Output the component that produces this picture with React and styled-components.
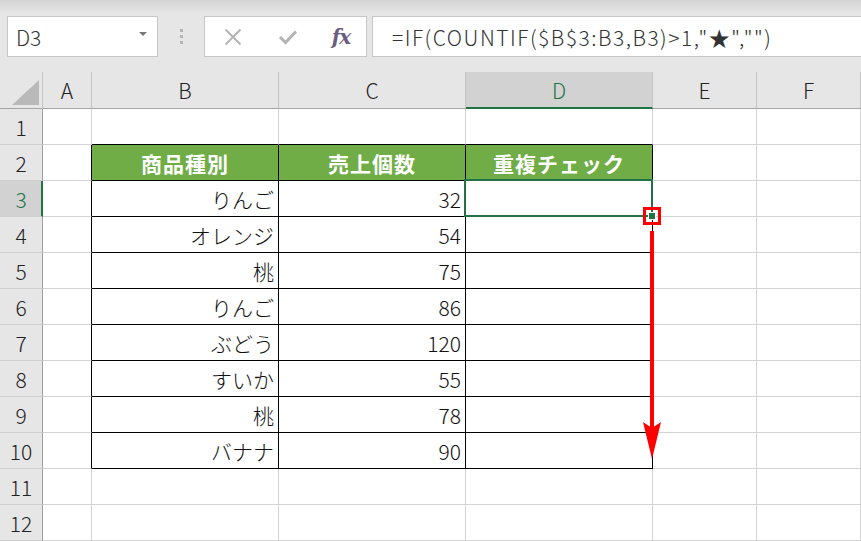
import React from "react";
import styled, { createGlobalStyle } from "styled-components";

const GlobalStyle = createGlobalStyle`
  html, body { margin: 0; padding: 0; background: #ffffff; overflow: hidden; }
  * { box-sizing: border-box; }
`;

const FONT = `"Noto Sans CJK JP", "Noto Sans", sans-serif`;
const GREEN = "#217346";

const Wrapper = styled.div`
  position: relative;
  width: 861px;
  height: 541px;
  overflow: hidden;
  font-family: ${FONT};
  font-weight: 300;
  background: #fff;
`;

const Toolbar = styled.div`
  height: 72px;
  display: flex;
  align-items: flex-start;
  padding: 16px 0 0 7px;
  background: linear-gradient(to bottom, #d4d4d4 0px, #e6e6e6 14px, #e6e6e6 100%);
`;

const NameBox = styled.div`
  width: 151px;
  height: 41px;
  background: #fff;
  border: 1px solid #c6c6c6;
  display: flex;
  align-items: center;
  justify-content: space-between;
  padding: 1px 10px 0 8px;
  font-size: 21px;
  color: #333;
`;

const Caret = styled.span`
  width: 0;
  height: 0;
  border-left: 4px solid transparent;
  border-right: 4px solid transparent;
  border-top: 4px solid #777;
  margin-top: -6px;
`;

const Grip = styled.div`
  width: 46px;
  height: 41px;
  display: flex;
  flex-direction: column;
  align-items: center;
  justify-content: center;
  gap: 3px;
`;

const GripDot = styled.span`
  width: 3px;
  height: 3px;
  background: #b4b4b4;
`;

const ButtonBox = styled.div`
  width: 163px;
  height: 41px;
  background: #fff;
  border: 1px solid #c6c6c6;
  display: flex;
  align-items: center;
  padding-left: 17px;
`;

const IconSlot = styled.div`
  width: ${(p) => p.$w}px;
  display: flex;
  justify-content: center;
  align-items: center;
`;

const Fx = styled.span`
  font-family: "DejaVu Serif", "Liberation Serif", serif;
  font-style: italic;
  font-weight: bold;
  font-size: 20px;
  color: #6a5d80;
  letter-spacing: -1px;
`;

const FormulaInput = styled.div`
  flex: 1;
  margin-left: 5px;
  height: 41px;
  background: #fff;
  border: 1px solid #c6c6c6;
  border-right: none;
  display: flex;
  align-items: center;
  padding: 1px 0 0 19px;
  font-size: 21px;
  letter-spacing: 1.5px;
  color: #333;
  white-space: nowrap;
`;

const Sheet = styled.div`
  display: grid;
  grid-template-columns: 43px 49px 187px 187px 187px 104px 1fr;
  grid-template-rows: 37px repeat(12, 36px);
`;

const Corner = styled.div`
  position: relative;
  background: #e6e6e6;
  border-right: 1px solid #c3c3c3;
  border-bottom: 1px solid #a6a6a6;
`;

const CornerTri = styled.span`
  position: absolute;
  right: 3px;
  bottom: 3px;
  width: 0;
  height: 0;
  border-left: 27px solid transparent;
  border-bottom: 25px solid #b9b9b9;
`;

const ColHeader = styled.div`
  background: ${(p) => (p.$active ? "#d2d2d2" : "#e6e6e6")};
  color: ${(p) => (p.$active ? GREEN : "#222")};
  border-right: 1px solid #c3c3c3;
  border-bottom: ${(p) => (p.$active ? `2px solid ${GREEN}` : "1px solid #a6a6a6")};
  display: flex;
  align-items: center;
  justify-content: center;
  font-size: 21px;
  padding-top: ${(p) => (p.$active ? "1px" : "0")};
`;

const RowHeader = styled.div`
  background: ${(p) => (p.$active ? "#d2d2d2" : "#e6e6e6")};
  color: ${(p) => (p.$active ? GREEN : "#222")};
  border-right: ${(p) => (p.$active ? `2px solid ${GREEN}` : "1px solid #a0a0a0")};
  border-bottom: 1px solid #cfcfcf;
  display: flex;
  align-items: center;
  justify-content: center;
  font-size: 21px;
  padding-left: ${(p) => (p.$active ? "1px" : "0")};
`;

const Cell = styled.div`
  position: relative;
  background: ${(p) => (p.$head ? "#70ad47" : "#fff")};
  color: ${(p) => (p.$head ? "#fff" : "#111")};
  font-weight: ${(p) => (p.$head ? 700 : 300)};
  border-right: 1px solid ${(p) => p.$rb};
  border-bottom: 1px solid ${(p) => p.$bb};
  display: flex;
  align-items: center;
  justify-content: ${(p) => (p.$head ? "center" : "flex-end")};
  padding: 1px 4px 0 4px;
  font-size: 21px;
  letter-spacing: ${(p) => (p.$head ? "1px" : "0")};
  white-space: nowrap;
`;

const Selection = styled.div`
  position: absolute;
  z-index: 2;
  top: -2px;
  left: -2px;
  right: -1px;
  bottom: -1px;
  border: 2px solid ${GREEN};
  pointer-events: none;
`;

const FillHandle = styled.span`
  position: absolute;
  right: -5px;
  bottom: -5px;
  width: 8px;
  height: 8px;
  background: ${GREEN};
  border: 1px solid #fff;
`;

const Annotation = styled.svg`
  position: absolute;
  z-index: 3;
  left: 640px;
  top: 204px;
  overflow: visible;
`;

const COLS = ["A", "B", "C", "D", "E", "F"];
const DATA = {
  2: ["商品種別", "売上個数", "重複チェック"],
  3: ["りんご", "32", ""],
  4: ["オレンジ", "54", ""],
  5: ["桃", "75", ""],
  6: ["りんご", "86", ""],
  7: ["ぶどう", "120", ""],
  8: ["すいか", "55", ""],
  9: ["桃", "78", ""],
  10: ["バナナ", "90", ""],
};

const GRID = "#d4d4d4";
const BLACK = "#000";

function cellBorders(row, col) {
  const inTableRows = row >= 2 && row <= 10;
  const inTableCols = col >= 1 && col <= 3;
  let rb = GRID;
  let bb = GRID;
  if (inTableRows && (inTableCols || col === 0)) rb = BLACK;
  if ((inTableRows || row === 1) && inTableCols) bb = BLACK;
  return { rb, bb };
}

export default function App() {
  const rows = Array.from({ length: 12 }, (_, i) => i + 1);
  return (
    <Wrapper>
      <GlobalStyle />
      <Toolbar>
        <NameBox>
          <span>D3</span>
          <Caret />
        </NameBox>
        <Grip>
          <GripDot />
          <GripDot />
          <GripDot />
        </Grip>
        <ButtonBox>
          <IconSlot $w={22}>
            <svg width="18" height="18" viewBox="0 0 18 18">
              <path d="M1.5 1.5 L16.5 16.5 M16.5 1.5 L1.5 16.5" stroke="#b3b3b3" strokeWidth="1.8" fill="none" />
            </svg>
          </IconSlot>
          <IconSlot $w={88}>
            <svg width="20" height="16" viewBox="0 0 20 16">
              <path d="M2 8 L7.5 13.5 L18 2.5" stroke="#b3b3b3" strokeWidth="3" fill="none" />
            </svg>
          </IconSlot>
          <IconSlot $w={18}>
            <Fx>fx</Fx>
          </IconSlot>
        </ButtonBox>
        <FormulaInput>=IF(COUNTIF($B$3:B3,B3)&gt;1,"★","")</FormulaInput>
      </Toolbar>
      <Sheet>
        <Corner>
          <CornerTri />
        </Corner>
        {COLS.map((c) => (
          <ColHeader key={c} $active={c === "D"}>
            {c}
          </ColHeader>
        ))}
        {rows.map((r) => (
          <React.Fragment key={r}>
            <RowHeader $active={r === 3}>{r}</RowHeader>
            {COLS.map((c, ci) => {
              const { rb, bb } = cellBorders(r, ci);
              const vals = DATA[r];
              const text = vals && ci >= 1 && ci <= 3 ? vals[ci - 1] : "";
              const selected = r === 3 && c === "D";
              return (
                <Cell key={c} $rb={rb} $bb={bb} $head={r === 2 && ci >= 1 && ci <= 3}>
                  {text}
                  {selected && (
                    <Selection>
                      <FillHandle />
                    </Selection>
                  )}
                </Cell>
              );
            })}
          </React.Fragment>
        ))}
      </Sheet>
      <Annotation width="24" height="260" viewBox="0 0 24 260">
        <rect x="4.5" y="4.5" width="15" height="15" fill="none" stroke="#ff0000" strokeWidth="3" />
        <rect x="10" y="27" width="4" height="198" fill="#ff0000" />
        <polygon points="3,218 12,224 21,218 12,255" fill="#ff0000" />
      </Annotation>
    </Wrapper>
  );
}
